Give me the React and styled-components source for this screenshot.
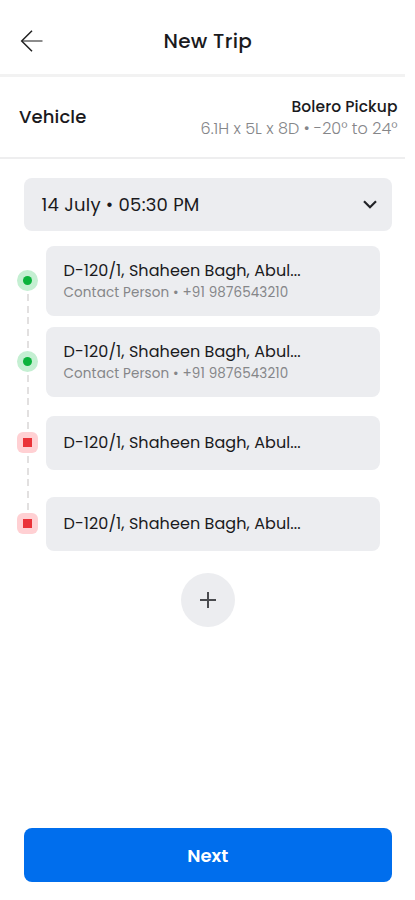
import React, { useState } from "react";
import styled, { createGlobalStyle } from "styled-components";

const COLORS = {
  text: "#1a1a1d",
  muted: "#858689",
  panel: "#ecedf0",
  line: "#eeeeef",
  primary: "#006eed",
};

const GlobalStyle = createGlobalStyle`
  * {
    box-sizing: border-box;
  }
  body {
    margin: 0;
    background: #fff;
    color: ${COLORS.text};
    font-family: Poppins, Inter, sans-serif;
  }
  button {
    font: inherit;
    color: inherit;
    border: 0;
    padding: 0;
    cursor: pointer;
  }
`;

const Screen = styled.div`
  display: flex;
  flex-direction: column;
  width: 404.5px;
  height: 900px;
  background: #fff;
`;

const Header = styled.header`
  display: grid;
  grid-template-columns: 44px 1fr 33px;
  align-items: center;
  height: 77px;
  padding: 8px 0 0;
  border-bottom: 3px solid #f2f2f2;
`;

const BackButton = styled.button`
  display: flex;
  padding-left: 20px;
  background: none;
`;

const Title = styled.h1`
  margin: 0;
  font-size: 20px;
  line-height: 28px;
  font-weight: 500;
  text-align: center;
  white-space: nowrap;
  letter-spacing: 0.3px;
`;

const Vehicle = styled.section`
  display: flex;
  justify-content: space-between;
  align-items: center;
  height: 82px;
  padding: 0 7px 1px 19px;
  border-bottom: 2px solid ${COLORS.line};
`;

const VehicleLabel = styled.h2`
  margin: 0;
  font-size: 18px;
  font-weight: 500;
  letter-spacing: 0.1px;
`;

const VehicleInfo = styled.div`
  padding-top: 2px;
  text-align: right;
  white-space: nowrap;
`;

const VehicleName = styled.div`
  font-size: 15.5px;
  line-height: 22px;
  font-weight: 500;
  letter-spacing: 0.08px;
`;

const VehicleSpec = styled.div`
  font-size: 16px;
  line-height: 22px;
  font-weight: 300;
  color: ${COLORS.muted};
`;

const Form = styled.main`
  flex: 1;
  display: flex;
  flex-direction: column;
  padding: 19px 12.5px 18px 23.5px;
`;

const DateSelect = styled.button`
  display: flex;
  align-items: center;
  justify-content: space-between;
  height: 53px;
  padding: 0 15px 1px 18px;
  border-radius: 8px;
  background: ${COLORS.panel};
  font-size: 18px;
`;

const DateText = styled.span`
  letter-spacing: 0.25px;
`;

const Stops = styled.ul`
  list-style: none;
  margin: 9px 12.5px 0 -6.5px;
  padding: 0;
`;

const Stop = styled.li`
  position: relative;
  display: flex;
  align-items: center;
  gap: 8px;
  height: 81px;

  /* dashed track to the next stop */
  &:not(:last-child)::before {
    content: "";
    position: absolute;
    top: 54px;
    left: 9.5px;
    width: 2px;
    height: 56px;
    background: repeating-linear-gradient(
      #e2e0e0 0 7px,
      transparent 7px 11.7px
    );
  }
`;

const Marker = styled.span`
  display: flex;
  align-items: center;
  justify-content: center;
  flex: none;
  width: 21px;
  height: 21px;
  border-radius: ${(props) => (props.$drop ? "6px" : "50%")};
  background: ${(props) => (props.$drop ? "#ffd0d3" : "#c4efd2")};

  &::after {
    content: "";
    width: 9px;
    height: 9px;
    border-radius: ${(props) => (props.$drop ? "0" : "50%")};
    background: ${(props) => (props.$drop ? "#ea3238" : "#0bb33c")};
  }
`;

const StopCard = styled.div`
  flex: 1;
  display: flex;
  flex-direction: column;
  justify-content: center;
  height: ${(props) => (props.$tall ? "70px" : "54px")};
  padding: ${(props) => (props.$tall ? "2px" : "0")} 0 0 17.5px;
  border-radius: 8px;
  background: ${COLORS.panel};
  white-space: nowrap;
`;

const Address = styled.div`
  font-size: 16px;
  line-height: 22px;
  letter-spacing: 0.08px;
`;

const Contact = styled.div`
  padding-top: 1px;
  font-size: 13.5px;
  line-height: 20px;
  letter-spacing: 0.13px;
  color: ${COLORS.muted};
`;

const AddButton = styled.button`
  display: flex;
  align-items: center;
  justify-content: center;
  align-self: center;
  width: 54px;
  height: 54px;
  margin-top: 9px;
  border-radius: 50%;
  background: ${COLORS.panel};
`;

const NextButton = styled.button`
  height: 54px;
  margin-top: auto;
  padding-top: 1px;
  border-radius: 8px;
  background: ${COLORS.primary};
  color: #fff;
  font-size: 18px;
  font-weight: 600;
`;

const initialStops = [
  { id: 1, address: "D-120/1, Shaheen Bagh, Abul...", contact: "Contact Person • +91 9876543210" },
  { id: 2, address: "D-120/1, Shaheen Bagh, Abul...", contact: "Contact Person • +91 9876543210" },
  { id: 3, address: "D-120/1, Shaheen Bagh, Abul...", drop: true },
  { id: 4, address: "D-120/1, Shaheen Bagh, Abul...", drop: true },
];

function App() {
  const [stops, setStops] = useState(initialStops);

  const addStop = () =>
    setStops([...stops, { ...initialStops[3], id: stops.length + 1 }]);

  return (
    <Screen>
      <GlobalStyle />
      <Header>
        <BackButton aria-label="Back">
          <svg width="24" height="24" viewBox="0 0 24 24" fill="none" strokeWidth="1.5">
            <path d="M2 12H22.5" stroke="#8c8c8c" strokeWidth="2" />
            <path d="M12 1.7 1.7 12 12 22.3" stroke="#222" />
          </svg>
        </BackButton>
        <Title>New Trip</Title>
      </Header>

      <Vehicle>
        <VehicleLabel>Vehicle</VehicleLabel>
        <VehicleInfo>
          <VehicleName>Bolero Pickup</VehicleName>
          <VehicleSpec>6.1H x 5L x 8D • -20° to 24°</VehicleSpec>
        </VehicleInfo>
      </Vehicle>

      <Form>
        <DateSelect>
          <DateText>14 July • 05:30 PM</DateText>
          <svg width="14" height="9" viewBox="0 0 14 9" fill="none" stroke="#222327" strokeWidth="2.2">
            <path d="M1 1.2 7 7.2 13 1.2" />
          </svg>
        </DateSelect>

        <Stops>
          {stops.map((stop) => (
            <Stop key={stop.id}>
              <Marker $drop={stop.drop} />
              <StopCard $tall={!!stop.contact}>
                <Address>{stop.address}</Address>
                {stop.contact && <Contact>{stop.contact}</Contact>}
              </StopCard>
            </Stop>
          ))}
        </Stops>

        <AddButton aria-label="Add stop" onClick={addStop}>
          <svg width="16" height="16" viewBox="0 0 16 16" fill="none" stroke="#4a4b4f" strokeWidth="2">
            <path d="M8 0V16M0 8H16" />
          </svg>
        </AddButton>

        <NextButton>Next</NextButton>
      </Form>
    </Screen>
  );
}

export default App;
